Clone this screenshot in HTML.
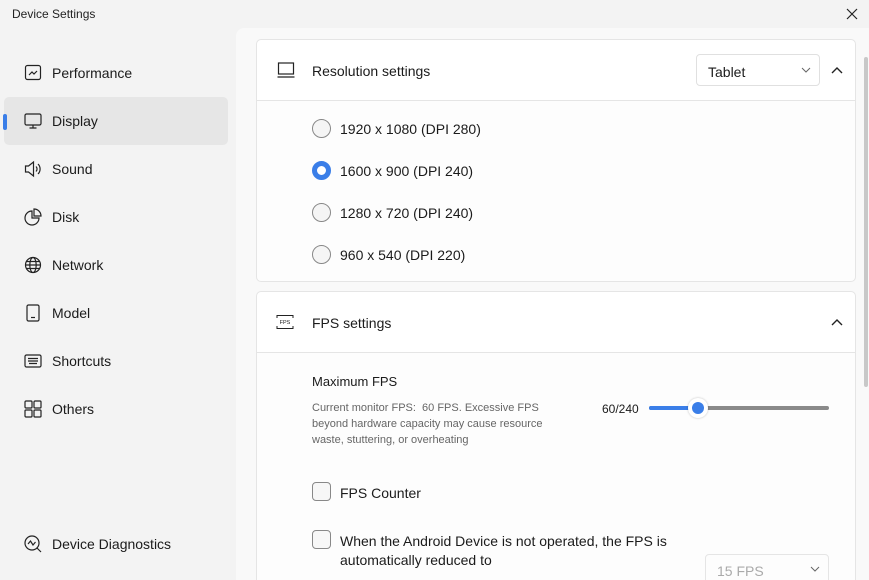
<!DOCTYPE html>
<html style="overflow:hidden;width:869px;height:580px"><head><meta charset="utf-8"><style>
*{box-sizing:border-box;margin:0;padding:0}
body{width:869px;height:580px;overflow:hidden;background:#f3f3f3;font-family:"Liberation Sans",sans-serif;color:#1b1b1b;position:relative}
.title{position:absolute;left:12px;top:7px;font-size:12px;color:#222}
.close{position:absolute;left:845px;top:7px}
.side{position:absolute;left:0;top:28px;width:236px;height:552px}
.item{position:absolute;left:4px;width:224px;height:48px;border-radius:5px;display:flex;align-items:center;font-size:14px}
.item svg{position:absolute;left:20px;top:15px}
.item span{position:absolute;left:48px}
.sel{background:#e6e6e6}
.bar{position:absolute;top:17px;width:4px;height:16px;border-radius:2px;background:#3a7ee8;left:-1px}
.main{position:absolute;left:236px;top:28px;width:633px;height:552px;background:#f9f9f9;border-top-left-radius:8px;overflow:hidden}
.card{position:absolute;left:20px;width:600px;background:#fdfdfd;border:1px solid #e5e5e5;border-radius:5px}
.hd{height:61px;border-bottom:1px solid #e5e5e5;background:#fff;border-radius:5px 5px 0 0;position:relative}
.hd .t{position:absolute;left:55px;top:23px;font-size:14px}
.radio{position:absolute;left:55px;font-size:14px;display:flex;align-items:center}
.radio i{width:19px;height:19px;border:1px solid #888;border-radius:50%;background:#f5f5f5;margin-right:9px;display:block}
.radio i.on{border:5px solid #3a7ee8;background:#fff}
.cb{width:19px;height:19px;border:1px solid #888;border-radius:4px;background:#f7f7f7;position:absolute}
.scroll{position:absolute;left:864px;top:57px;width:4px;height:330px;background:#c8c8c8;border-radius:2px}
</style></head><body>
<div class="title">Device Settings</div>
<svg class="close" width="14" height="14" viewBox="0 0 14 14"><path d="M2 2L12 12M12 2L2 12" stroke="#222" stroke-width="1.2"/></svg>
<div class="side">
 <div class="item" style="top:21px"><svg width="18" height="18" viewBox="0 0 18 18" fill="none" stroke="#222" stroke-width="1.2"><rect x="1.5" y="1.5" width="15" height="14" rx="2"/><path d="M5 11l3-3 2 2 3-3"/></svg><span>Performance</span></div>
 <div class="item sel" style="top:69px"><div class="bar"></div><svg width="18" height="18" viewBox="0 0 18 18" fill="none" stroke="#222" stroke-width="1.2"><rect x="1" y="2" width="16" height="11" rx="1.5"/><path d="M9 13v3M5.5 16h7"/></svg><span>Display</span></div>
 <div class="item" style="top:117px"><svg width="18" height="18" viewBox="0 0 18 18" fill="none" stroke="#222" stroke-width="1.2"><path d="M1.5 6h3l5-4v14l-5-4h-3z"/><path d="M12 6.5a3.5 3.5 0 0 1 0 5M14 4a7 7 0 0 1 0 10"/></svg><span>Sound</span></div>
 <div class="item" style="top:165px"><svg width="18" height="18" viewBox="0 0 18 18" fill="none" stroke="#222" stroke-width="1.2"><path d="M8 3a7 7 0 1 0 7 7H8z"/><path d="M10 1a7 7 0 0 1 7 7h-7z"/></svg><span>Disk</span></div>
 <div class="item" style="top:213px"><svg width="18" height="18" viewBox="0 0 18 18" fill="none" stroke="#222" stroke-width="1.2"><circle cx="9" cy="9" r="7.5"/><ellipse cx="9" cy="9" rx="3.2" ry="7.5"/><path d="M1.5 9h15M2.5 5.5h13M2.5 12.5h13"/></svg><span>Network</span></div>
 <div class="item" style="top:261px"><svg width="18" height="18" viewBox="0 0 18 18" fill="none" stroke="#222" stroke-width="1.2"><rect x="3" y="1" width="12" height="16" rx="1.5"/><path d="M7 13.5h4"/></svg><span>Model</span></div>
 <div class="item" style="top:309px"><svg width="18" height="18" viewBox="0 0 18 18" fill="none" stroke="#222" stroke-width="1.2"><rect x="1" y="3" width="16" height="12" rx="1.5"/><path d="M4 6.5h10M4 9h10M5 11.5h8"/></svg><span>Shortcuts</span></div>
 <div class="item" style="top:357px"><svg width="18" height="18" viewBox="0 0 18 18" fill="none" stroke="#222" stroke-width="1.2"><rect x="1" y="1" width="7" height="7" rx="1"/><rect x="10" y="1" width="7" height="7" rx="1"/><rect x="1" y="10" width="7" height="7" rx="1"/><rect x="10" y="10" width="7" height="7" rx="1"/></svg><span>Others</span></div>
 <div class="item" style="top:492px"><svg width="18" height="18" viewBox="0 0 18 18" fill="none" stroke="#222" stroke-width="1.2"><circle cx="8" cy="8" r="7"/><path d="M4 9l2.5-3 2.5 4 2.5-3M13 13l4 4"/></svg><span>Device Diagnostics</span></div>
</div>
<div class="main">
 <div class="card" style="top:11px;height:243px">
  <div class="hd">
   <svg style="position:absolute;left:20px;top:22px" width="18" height="16" viewBox="0 0 18 16" fill="none" stroke="#222" stroke-width="1.2"><rect x="1.5" y="1" width="15" height="11"/><path d="M0.5 15h17"/></svg>
   <div class="t">Resolution settings</div>
   <div style="position:absolute;left:439px;top:14px;width:124px;height:32px;border:1px solid #e0e0e0;border-radius:4px;background:#fff;font-size:14px;padding:9px 11px">Tablet
    <svg style="position:absolute;right:8px;top:12px" width="10" height="6" viewBox="0 0 10 6"><path d="M1 1l4 4 4-4" stroke="#666" fill="none"/></svg></div>
   <svg style="position:absolute;left:574px;top:26px" width="12" height="8" viewBox="0 0 12 8"><path d="M1 7l5-5 5 5" stroke="#222" stroke-width="1.4" fill="none"/></svg>
  </div>
  <div class="radio" style="top:79px"><i></i>1920 x 1080 (DPI 280)</div>
  <div class="radio" style="top:121px"><i class="on"></i>1600 x 900 (DPI 240)</div>
  <div class="radio" style="top:163px"><i></i>1280 x 720 (DPI 240)</div>
  <div class="radio" style="top:205px"><i></i>960 x 540 (DPI 220)</div>
 </div>
 <div class="card" style="top:263px;height:300px">
  <div class="hd">
   <svg style="position:absolute;left:19px;top:22px" width="18" height="16" viewBox="0 0 18 16" fill="none" stroke="#222" stroke-width="1"><path d="M1 4V1.5h16V4M1 12v2.5h16V12"/><text x="9" y="10" font-size="5.5" text-anchor="middle" fill="#222" stroke="none" font-family="Liberation Sans">FPS</text></svg>
   <div class="t">FPS settings</div>
   <svg style="position:absolute;left:574px;top:26px" width="12" height="8" viewBox="0 0 12 8"><path d="M1 7l5-5 5 5" stroke="#222" stroke-width="1.4" fill="none"/></svg>
  </div>
  <div style="position:absolute;left:55px;top:82px;font-size:13px">Maximum FPS</div>
  <div style="position:absolute;left:55px;top:108px;width:260px;font-size:11px;line-height:16px;color:#666">Current monitor FPS:&nbsp; 60 FPS. Excessive FPS beyond hardware capacity may cause resource waste, stuttering, or overheating</div>
  <div style="position:absolute;left:345px;top:110px;font-size:12px">60/240</div>
  <div style="position:absolute;left:392px;top:114px;width:180px;height:4px;background:#8a8a8a;border-radius:2px"></div>
  <div style="position:absolute;left:392px;top:114px;width:50px;height:4px;background:#3a7ee8;border-radius:2px"></div>
  <div style="position:absolute;left:431px;top:106px;width:20px;height:20px;border-radius:50%;background:#fff;box-shadow:0 0 2px rgba(0,0,0,.25)"></div>
  <div style="position:absolute;left:435px;top:110px;width:12px;height:12px;border-radius:50%;background:#3a7ee8"></div>
  <div class="cb" style="left:55px;top:190px"></div>
  <div style="position:absolute;left:83px;top:193px;font-size:14px">FPS Counter</div>
  <div class="cb" style="left:55px;top:238px"></div>
  <div style="position:absolute;left:83px;top:240px;font-size:14px;line-height:19px;width:340px">When the Android Device is not operated, the FPS is automatically reduced to</div>
  <div style="position:absolute;left:448px;top:262px;width:124px;height:32px;border:1px solid #e5e5e5;border-radius:4px;font-size:14px;color:#aaa;padding:8px 11px">15 FPS
   <svg style="position:absolute;right:8px;top:11px" width="10" height="6" viewBox="0 0 10 6"><path d="M1 1l4 4 4-4" stroke="#666" fill="none"/></svg></div>
 </div>
</div>
<div class="scroll"></div>
</body></html>
